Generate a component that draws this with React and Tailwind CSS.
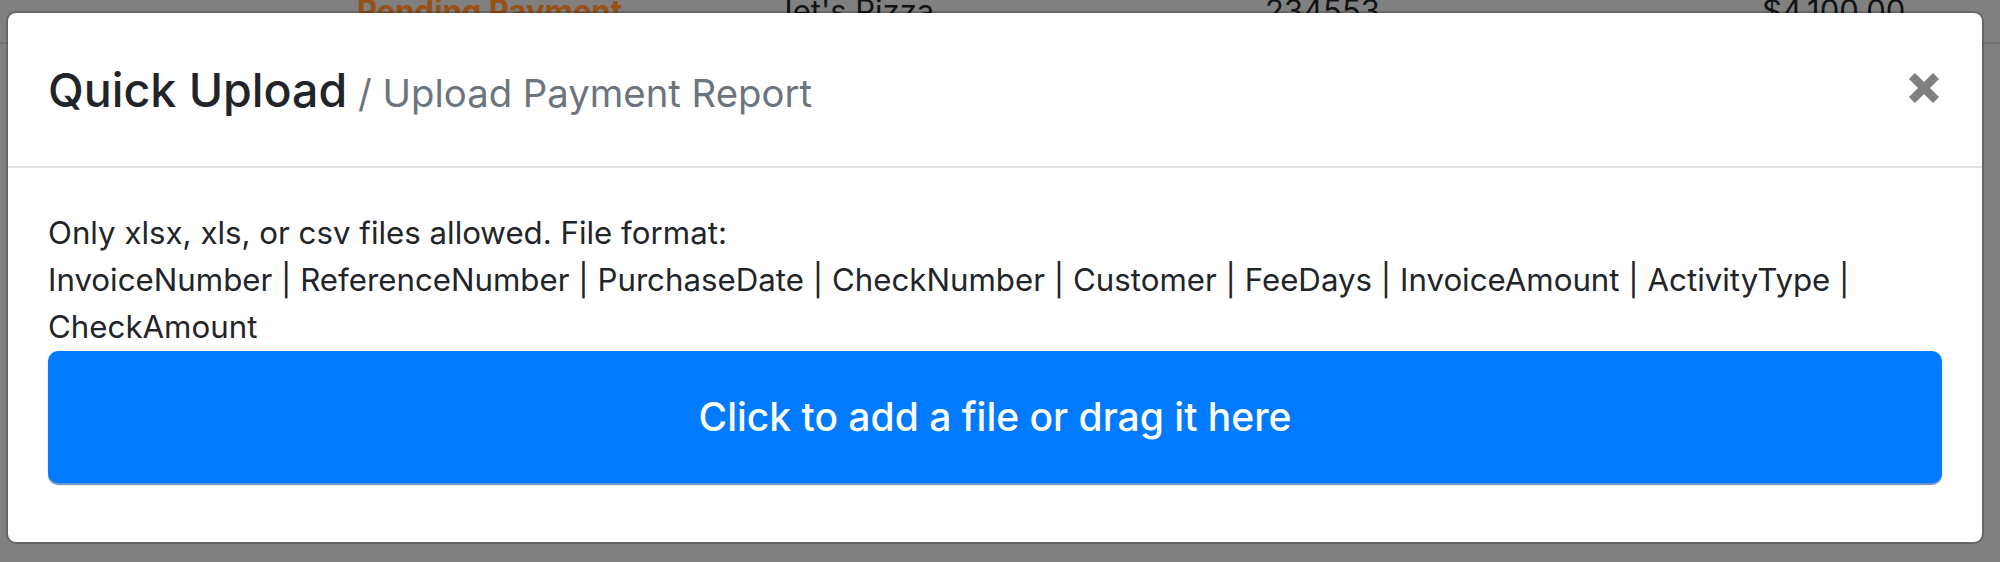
import { useState } from 'react';

const fields = [
    'InvoiceNumber',
    'ReferenceNumber',
    'PurchaseDate',
    'CheckNumber',
    'Customer',
    'FeeDays',
    'InvoiceAmount',
    'ActivityType',
    'CheckAmount',
];

function CloseIcon() {
    return (
        <svg className="w-[32px] h-[32px]" viewBox="0 0 32 32" fill="none">
            <path d="M4 4L28 28M28 4L4 28" stroke="#808080" strokeWidth={8.5} />
        </svg>
    );
}

function PageBehind() {
    // table row of the page underneath, dimmed by the backdrop
    return (
        <div className="h-[562px] bg-[#808080]">
            <div className="h-[44px] border-b-2 border-[#727272] overflow-hidden">
                <div className="flex -mt-[9px] text-[31px] leading-[40px] text-[#111315]">
                    <div className="w-[357px]" />
                    <div className="w-[418px] font-bold text-[#9a4f14]">Pending Payment</div>
                    <div className="w-[490px]">Jet's Pizza</div>
                    <div className="w-[497px]">234553</div>
                    <div>$4,100.00</div>
                </div>
            </div>
        </div>
    );
}

export default function App() {
    const [fileName, setFileName] = useState(null);

    return (
        <div className="relative w-[2000px] h-[562px] overflow-hidden font-['Inter',_'Liberation_Sans',_sans-serif]">
            <PageBehind />
            <div className="absolute inset-0 pl-[6px] pt-[11px]">
                <div className="w-[1978px] h-[533px] bg-white bg-clip-padding border-2 border-black/20 rounded-[10px] flex flex-col">
                    <div className="h-[155px] shrink-0 flex items-center justify-between px-[40px] border-b-2 border-[#dee2e6]">
                        <h5 className="pt-[3px] leading-[1.2] text-[#212529]">
                            <span className="text-[46.5px] font-medium">Quick Upload</span>
                            <span className="text-[38.3px] text-[#6c757d]"> / Upload Payment Report</span>
                        </h5>
                        <button className="mr-[2px] mb-[3px]" aria-label="Close">
                            <CloseIcon />
                        </button>
                    </div>
                    <div className="px-[40px] pt-[42px] pb-[59px] text-[#212529]">
                        <p className="text-[31.25px] leading-[47px]">
                            Only xlsx, xls, or csv files allowed. File format:
                            <br />
                            {fields.join(' | ')}
                        </p>
                        <label className="h-[132px] flex items-center justify-center rounded-[10px] bg-[#007bff] shadow-[0_2px_1px_rgba(0,70,160,0.6)] text-white text-[39px] font-medium cursor-pointer">
                            <input
                                type="file"
                                accept=".xlsx,.xls,.csv"
                                className="hidden"
                                onChange={e => setFileName(e.target.files?.[0]?.name ?? null)}
                            />
                            {fileName || 'Click to add a file or drag it here'}
                        </label>
                    </div>
                </div>
            </div>
        </div>
    );
}
